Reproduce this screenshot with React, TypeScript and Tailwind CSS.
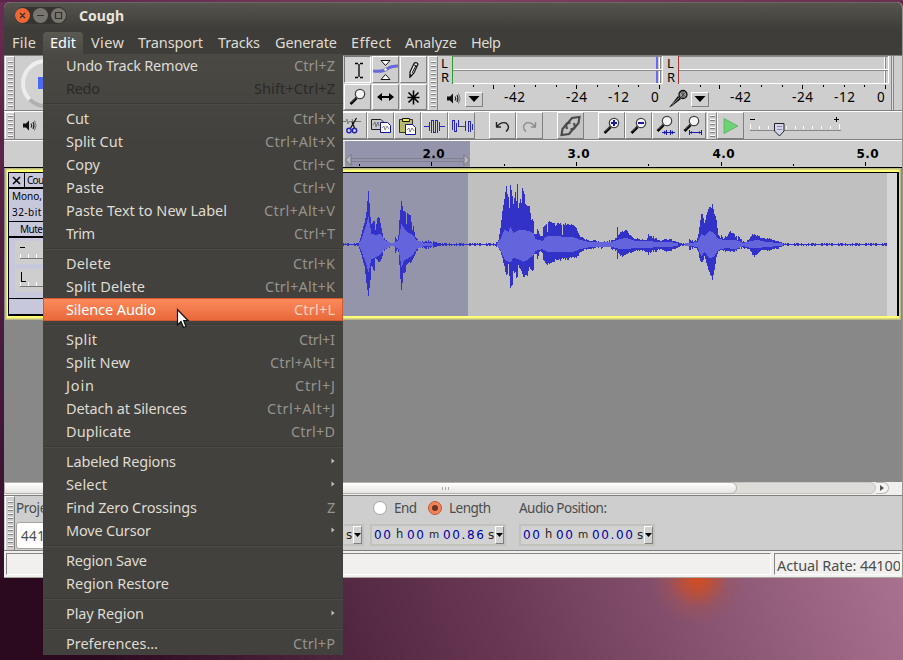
import React, { useLayoutEffect, useRef } from "react";

type FitProps = { t: string; w: number; className?: string };

/* Spreads or tightens a label so that it takes exactly `w` pixels. */
function Fit({ t, w, className = "" }: FitProps) {
  const ref = useRef<HTMLSpanElement>(null);
  useLayoutEffect(() => {
    const el = ref.current;
    if (!el) return;
    el.style.width = "auto";
    el.style.letterSpacing = "0px";
    const natural = el.getBoundingClientRect().width;
    el.style.letterSpacing = `${(w - natural) / Math.max(1, t.length - 1)}px`;
    el.style.width = `${w}px`;
  }, [t, w]);
  return (
    <span ref={ref} className={`inline-block shrink-0 whitespace-pre ${className}`}>
      {t}
    </span>
  );
}

type Item = [label: string, w: number, key?: string, kw?: number];
const groups: Item[][] = [
  [["Undo Track Remove", 132, "Ctrl+Z", 41], ["Redo", 34, "Shift+Ctrl+Z", 81]],
  [
    ["Cut", 23, "Ctrl+X", 42],
    ["Split Cut", 57, "Ctrl+Alt+X", 70],
    ["Copy", 34, "Ctrl+C", 42],
    ["Paste", 38, "Ctrl+V", 42],
    ["Paste Text to New Label", 161, "Ctrl+Alt+V", 71],
    ["Trim", 29, "Ctrl+T", 41],
  ],
  [["Delete", 45, "Ctrl+K", 42], ["Split Delete", 79, "Ctrl+Alt+K", 70], ["Silence Audio", 90, "Ctrl+L", 41]],
  [
    ["Split", 31, "Ctrl+I", 36],
    ["Split New", 64, "Ctrl+Alt+I", 65],
    ["Join", 28, "Ctrl+J", 40],
    ["Detach at Silences", 121, "Ctrl+Alt+J", 68],
    ["Duplicate", 65, "Ctrl+D", 44],
  ],
  [
    ["Labeled Regions", 110, ">"],
    ["Select", 41, ">"],
    ["Find Zero Crossings", 131, "Z", 8],
    ["Move Cursor", 85, ">"],
  ],
  [["Region Save", 81], ["Region Restore", 103]],
  [["Play Region", 78, ">"]],
  [["Preferences...", 92, "Ctrl+P", 42]],
];

function Row({ item }: { item: Item }) {
  const [label, w, key, kw] = item;
  const active = label === "Silence Audio";
  const off = label === "Redo";
  const tone = active
    ? "border-[#d4592c] bg-linear-to-b from-[#fb8a5c] to-[#e9693a] text-white"
    : off
      ? "border-transparent text-[#2b2a28]"
      : "border-transparent text-[#dfdbd2]";
  return (
    <div className={`flex h-[23px] items-center justify-between border pr-[7px] pb-[2px] pl-[22px] ${tone}`}>
      <Fit t={label} w={w} />
      {key === ">" ? (
        <svg width="4" height="6" className="mt-[1px]"><path d="M.5 .5L3.500 3L.5 5.500Z" fill="#c5c1b9" /></svg>
      ) : key ? (
        <Fit t={key} w={kw || 8} className={active ? "text-[#f9d2c3]" : off ? "text-[#2b2a28]" : "text-[#96938c]"} />
      ) : null}
    </div>
  );
}

function Menu() {
  return (
    <div className="absolute top-[54px] left-[43px] z-20 h-[601px] w-[300px] bg-[#42413d] bg-linear-to-b from-[#4a4944] to-[#42413d] to-15% text-[14.5px] leading-[20px]">
      {groups.map((g, i) => (
        <React.Fragment key={i}>
          {i > 0 && (
            <div className="h-[7px] pt-[3px]">
              <div className="h-[2px] border-t border-b border-t-[#3b3a36] border-b-[#4b4a46]" />
            </div>
          )}
          {g.map((it) => <Row key={it[0]} item={it} />)}
        </React.Fragment>
      ))}
    </div>
  );
}

function Grip({ n, className = "" }: { n: number; className?: string }) {
  return (
    <div className={`flex w-[10px] shrink-0 flex-col items-center justify-center gap-[2px] border-t border-r border-l border-t-white border-r-[#858585] border-l-white ${className}`}>
      {Array.from({ length: n }, (_, i) => (
        <div key={i} className="h-[2px] w-[5px] border-t border-b border-t-white border-b-[#828282]" />
      ))}
    </div>
  );
}

function Btn({ children, className = "w-[27px]", down = false }: { children?: React.ReactNode; className?: string; down?: boolean }) {
  const edge = down ? "border-t-[#777] border-l-[#777] border-r-white border-b-white bg-[#d4d4d4]" : "border-t-white border-l-white border-r-[#808080] border-b-[#808080]";
  return <div className={`flex shrink-0 items-center justify-center border ${edge} ${className}`}>{children}</div>;
}

function Svg({ children, w = 25, h = 25 }: { children: React.ReactNode; w?: number; h?: number }) {
  return <svg width={w} height={h} viewBox={`0 0 ${w} ${h}`} fill="none" className="shrink-0">{children}</svg>;
}

function Lens({ mark = "" }: { mark?: string }) {
  const small = mark === "fit" || mark === "sel";
  return (
    <Svg>
      <g transform={small ? "translate(-1 -2)" : ""}>
        <path d="M5.500 20L11.500 14" stroke="#000" strokeWidth="2.600" />
        <path d="M6 18.500L10.500 14" stroke="#999" strokeWidth=".7" />
        <circle cx="15" cy="10" r="4.700" fill="#f4f4f4" stroke="#444" strokeWidth="1.200" />
      </g>
      {mark === "+" && <path d="M12 10H18M15 7V13" stroke="#1818a8" strokeWidth="2" />}
      {mark === "-" && <path d="M12 10H18" stroke="#1818a8" strokeWidth="2" />}
      {mark === "fit" && <path d="M9 19.500H22M13.500 17V22M17.500 17V22" stroke="#1818b0" />}
      {mark === "fit" && <path d="M11 17.500V21.500L13.500 19.500ZM20 17.500V21.500L17.500 19.500Z" fill="#1818b0" />}
      {mark === "sel" && <path d="M9.500 17V22M21.500 17V22M10 19.500H21" stroke="#1818b0" />}
      {mark === "sel" && <path d="M10 19.500L12 18V21ZM21 19.500L19 18V21Z" fill="#1818b0" />}
    </Svg>
  );
}

function Speaker() {
  return (
    <Svg w={15} h={13}>
      <path d="M0 4.500H3L6 1.500V11.500L3 8.500H0Z" fill="#111" />
      <path d="M8 4.500Q9.500 6.500 8 8.500M10 3Q12 6.500 10 10" stroke="#222" strokeWidth="1.100" />
      <path d="M11.500 1.500Q14.500 6.500 11.500 11.500" stroke="#666" strokeWidth=".9" />
    </Svg>
  );
}

function Tools() {
  return (
    <div className="grid w-[83px] shrink-0 grid-cols-3 grid-rows-2 gap-[1px]">
      <Btn down className=""><Svg><path d="M10 6.500H13M15 6.500H18M10 20.500H13M15 20.500H18M14 7V20" stroke="#000" strokeWidth="1.300" /></Svg></Btn>
      <Btn className="">
        <Svg>
          <path d="M0 14Q10 15 14 12T25 9" stroke="#6868dc" strokeWidth="3" />
          <path d="M8 3.500H17L12.500 8.500ZM8 22.500H17L12.500 17.500Z" fill="#fff" stroke="#111" />
          <circle cx="12.500" cy="12.500" r="1.500" fill="#fff" stroke="#777" strokeWidth=".5" />
        </Svg>
      </Btn>
      <Btn className="">
        <Svg>
          <path d="M9 15L13 6.500Q15 4.500 17 7L13 16L9 20Z" fill="#eee" stroke="#111" strokeWidth="1.200" />
          <path d="M12.500 7.500L16 9.500M11 16L15 8.500" stroke="#111" />
          <path d="M8.500 21L9 17L11.500 18.500Z" fill="#111" />
        </Svg>
      </Btn>
      <Btn className=""><Lens /></Btn>
      <Btn className=""><Svg><path d="M6 13H19" stroke="#000" strokeWidth="2" /><path d="M4 13L9 9V17ZM21 13L16 9V17Z" fill="#000" /></Svg></Btn>
      <Btn className=""><Svg><path d="M12.500 6.500V20.500M6.500 13.500H18.500M7.500 8.500L17.500 18.500M17.500 8.500L7.500 18.500" stroke="#000" strokeWidth="1.600" /></Svg></Btn>
    </div>
  );
}

function Mic() {
  return (
    <Svg w={19} h={19}>
      <path d="M0 18.500L9 7L12 10L3 17Z" fill="#111" />
      <path d="M3 15.500L10 9" stroke="#999" />
      <circle cx="14" cy="5.500" r="4" fill="#999" stroke="#111" strokeWidth="1.300" />
      <path d="M11 3L17 8M12 8L17 3M14 2V9" stroke="#333" strokeWidth=".7" />
    </Svg>
  );
}

function Meter({ color, rec = false }: { color: string; rec?: boolean }) {
  const o = rec ? 226 : 0;
  const ticks = rec ? [700, 719, 740, 761, 782, 802, 823, 844, 864, 885] : [473, 493, 514, 535, 556, 576, 597, 618, 638, 659];
  return (
    <div className="flex w-[226px] shrink-0 flex-col">
      <div className="flex h-[28px]">
        <div className="w-[14px] shrink-0 pl-[3px] text-[13px] leading-[14px] text-black">
          <div className="h-[14px]">L</div>
          <div className="h-[14px]">R</div>
        </div>
        <div className={`w-[1px] ${color}`} />
        <div className="flex flex-1 flex-col">
          {[0, 1].map((i) => (
            <div key={i} className={`flex h-[14px] justify-end border-t border-b border-t-[#8a8a8a] border-b-white ${rec ? "pr-[2px]" : "pr-[1px]"}`}>
              {!rec && <div className="mr-[1px] w-[2px] bg-[#6a6af0]" />}
              <div className="w-[2px] border-r border-l border-r-[#888] border-l-white" />
            </div>
          ))}
        </div>
        <div className="w-[2px] border-l border-white" />
      </div>
      <svg width="226" height="5" className="shrink-0" shapeRendering="crispEdges">
        {ticks.map((t, i) => <path key={t} d={`M${t - 438 - o + 0.5} 1V${[1, 5, 9].includes(i) ? 5 : 3}`} stroke="#000" />)}
      </svg>
      <div className={`-mt-[1px] flex h-[20px] items-center text-[13.5px] text-black ${rec ? "pl-[5px]" : "pl-[9px]"}`}>
        <div className={rec ? "w-[22px]" : "w-[18px]"}>{rec ? <Mic /> : <Speaker />}</div>
        <Btn className="mt-[2px] h-[15px] w-[18px]"><svg width="12" height="6"><path d="M.5 0H11.500L6 6Z" /></svg></Btn>
        <Fit t="-42" w={21} className="-mt-[2px] ml-[21px]" />
        <Fit t="-24" w={21} className="-mt-[2px] ml-[41px]" />
        <Fit t="-12" w={21} className="-mt-[2px] ml-[21px]" />
        <Fit t="0" w={8} className="-mt-[2px] ml-[22px]" />
      </div>
    </div>
  );
}

function TopBar() {
  return (
    <div className="flex h-[56px] shrink-0 border-t border-b border-[#7f7f7f]">
      <Grip n={12} className="ml-[1px]" />
      <div className="flex w-[329px] items-center pl-[6px]">
        <div className="flex h-[49px] w-[49px] items-center justify-center rounded-full border-[4px] border-t-[#f0f0f0] border-r-[#bbb] border-b-[#b0b0b0] border-l-[#ececec] bg-[#d2d2d2]">
          <div className="h-[12px] w-[15px] bg-[#4a6af0]" />
        </div>
      </div>
      <Tools />
      <div className="w-[1px]" />
      <Grip n={12} />
      <Meter color="bg-[#2f9a35]" />
      <Meter color="bg-[#a83232]" rec />
      <div className="w-[1px]" />
      <div className="w-[3px] border-r border-l border-[#858585] bg-[#dedede]" />
    </div>
  );
}

function EditBar() {
  const page = (x: number, y: number) => (
    <g transform={`translate(${x} ${y})`}>
      <path d="M.5 .5H7.500L10.500 3.500V10.500H.5Z" fill="#fff" stroke="#1515a0" />
      <path d="M2 6L4 4L5 8L7 4L9 7" stroke="#555" strokeWidth=".7" />
    </g>
  );
  return (
    <div className="flex h-[28px] shrink-0 border-b border-[#7f7f7f]">
      <Grip n={6} className="ml-[1px]" />
      <div className="flex w-[325px] items-center pl-[8px]"><Speaker /></div>
      <Btn><Svg><path d="M1 8.500H5L6 6L7 11L8 8.500H20M11 6L13 11" stroke="#777" /><path d="M15.500 5L9 16M11 9L13.500 15" stroke="#111" strokeWidth="1.300" /><circle cx="8" cy="17.500" r="2.200" stroke="#2222b0" strokeWidth="1.400" /><circle cx="13.500" cy="17.500" r="2.200" stroke="#2222b0" strokeWidth="1.400" /></Svg></Btn>
      <Btn><Svg><path d="M3.500 6.500H13L15.500 9V16.500H3.500Z" fill="#c8c8c8" stroke="#222" /><path d="M5 12L7 9L8 14L10 9L11 13" stroke="#555" strokeWidth=".7" />{page(12, 9)}</Svg></Btn>
      <Btn><Svg><path d="M4.500 6.500H17.500V19.500H4.500Z" fill="#b9b96a" stroke="#333" /><path d="M7.500 5.500H14.500V8.500H7.500Z" fill="#eded58" stroke="#111" />{page(10, 11)}</Svg></Btn>
      <Btn><Svg><path d="M2 13.500H7M18 13.500H23" stroke="#2626c0" /><path d="M7.500 9V18M9.500 7V20M11.500 7V20M13.500 7V20M15.500 7V20M17.500 9V18M9 7.500H12M13 7.500H16M9 19.500H10M11 19.500H14" stroke="#2626c0" /></Svg></Btn>
      <Btn><Svg><path d="M10 13.500H16" stroke="#444" /><path d="M3.500 8V17M5.500 7V19M7.500 10V19M9.500 7V14M16.500 8V18M19.500 8V19M21.500 8V19M23.500 11V17M3 7.500H6M5 18.500H8M19 8.500H22" stroke="#2626c0" /></Svg></Btn>
      <div className="w-[14px]" />
      <Btn><Svg><path d="M6.500 14V9M6 14H11M7 13.500Q11 8.500 16 10Q21 14 16 18.500" stroke="#222" strokeWidth="1.400" /></Svg></Btn>
      <Btn><Svg><path d="M18.500 14V9M19 14H14M18 13.500Q14 8.500 9 10Q4 14 9 18.500" stroke="#8c8c8c" strokeWidth="1.400" /></Svg></Btn>
      <div className="w-[14px]" />
      <Btn className="w-[27px] bg-[#c4c4c4]">
        <Svg>
          <path d="M9 16L8 12L14 5L21.500 4L20.500 10L16 15.500L12.500 16.500" stroke="#4a4a4a" strokeWidth="2.100" />
          <path d="M16 10L17 14L11 21L3.500 22L4.500 16L9 10.500L12.500 9.500" stroke="#4a4a4a" strokeWidth="2.100" />
        </Svg>
      </Btn>
      <div className="w-[14px]" />
      <Btn><Lens mark="+" /></Btn>
      <Btn><Lens mark="-" /></Btn>
      <Btn><Lens mark="fit" /></Btn>
      <Btn><Lens mark="sel" /></Btn>
      <Grip n={6} className="ml-[1px]" />
      <Btn className="w-[27px]"><Svg><path d="M6 5.500L20 13L6 20.500Z" fill="#6ad472" stroke="#51a85a" strokeWidth=".7" /></Svg></Btn>
      <svg width="100" height="27" className="ml-[3px]" shapeRendering="crispEdges">
        <path d="M3 7.500H8M87 7.500H92M89.500 5V10" stroke="#000" />
        {Array.from({ length: 11 }, (_, i) => <path key={i} d={`M${3.5 + i * 8.9} ${i % 10 ? 14 : 12}V17`} stroke="#fff" />)}
        <path d="M3 18.500H94" stroke="#888" />
        <path d="M27.500 11.500H37V19L32.500 24L27.500 19Z" fill="#d4d4ec" stroke="#222" shapeRendering="auto" />
        <path d="M30 14.500H35M30 17.500H35" stroke="#8888a8" />
      </svg>
    </div>
  );
}

function Ruler() {
  return (
    <div className="flex h-[28px] shrink-0 border-t border-b border-t-white border-b-black">
      <div className="w-[339px] border-r border-[#ddd]" />
      <svg width="558" height="26" shapeRendering="crispEdges" fontFamily="'DejaVu Sans'" fontWeight="700" fontSize="12">
        <rect x="2" width="125" height="26" fill="#9494ac" />
        <path d="M8 17.500H120M8 20.500H120" stroke="#7f7f8e" />
        <path d="M2.500 19L8 13.500V24.500ZM126.500 19L121 13.500V24.500Z" fill="#b8b8c4" stroke="#777" shapeRendering="auto" />
        {[16.5, 161.500, 305.500, 450.500].map((x) => <path key={x} d={`M${x} 23V25`} stroke="#000" />)}
        {[88.5, 233.500, 378.500, 522.500].map((x, i) => (
          <React.Fragment key={x}>
            <path d={`M${x} 21V25`} stroke="#000" />
            <text x={x - 9} y="17" textLength="22">{`${i + 2}.0`}</text>
          </React.Fragment>
        ))}
      </svg>
    </div>
  );
}

/* x, peak above the axis, peak below it */
const PEAKS = [
  [343, 1, 1], [358, 1, 1], [361, 10, 10], [364, 22, 22], [366, 32, 38], [368, 53, 51], [370, 28, 35], [371, 20, 20], [374, 23, 26], [375, 14, 13],
  [377, 27, 16], [379, 27, 18], [381, 16, 13], [383, 6, 6], [387, 3, 3], [390, 1, 2], [394, 1, 2], [395, 7, 8], [397, 5, 5], [398, 9, 7], [399, 24, 20],
  [401, 43, 45], [403, 33, 28], [405, 32, 27], [406, 20, 20], [407, 31, 19], [410, 29, 18], [412, 14, 15], [413, 19, 13], [415, 7, 8], [418, 3, 3],
  [428, 3, 3], [436, 1.500, 1.500], [444, 1, 1], [495, 1, 1], [498, 4, 3], [500, 16, 6], [502, 33, 13], [504, 45, 21], [506, 58, 30], [507, 50, 29],
  [508, 47, 20], [509, 36, 32], [510, 59, 43], [512, 48, 40], [513, 40, 25], [515, 52, 28], [516, 43, 32], [517, 60, 33], [518, 36, 20], [520, 45, 25],
  [521, 41, 25], [522, 56, 30], [524, 50, 31], [525, 40, 30], [527, 38, 31], [529, 38, 23], [531, 24, 25], [533, 23, 25], [534, 10, 8], [536, 11, 9],
  [537, 15, 14], [539, 10, 7], [542, 8, 8], [543, 17, 15], [546, 21, 19], [547, 12, 19], [548, 22, 18], [553, 22, 18], [555, 19, 15], [557, 21, 14],
  [561, 20, 15], [562, 9, 13], [563, 20, 14], [573, 20, 13], [577, 13, 11], [580, 8, 7], [585, 5, 5], [592, 3, 3], [596, 4, 3], [600, 1, 3],
  [603, 2, 2], [610, 3, 2], [615, 6, 6], [616, 7, 6], [617, 18, 15], [618, 9, 8], [622, 13, 11], [626, 14, 9], [631, 8, 8], [635, 5, 5],
  [643, 5, 6], [646, 4, 6], [648, 9, 9], [652, 7, 6], [660, 4, 5], [670, 5, 6], [677, 2, 3], [680, 1, 1], [688, 1, 1], [689, 5, 4],
  [693, 2, 2], [697, 5, 4], [699, 17, 12], [701, 30, 17], [702, 30, 18], [704, 22, 12], [707, 32, 21], [709, 37, 27], [711, 36, 31], [712, 40, 35],
  [714, 30, 25], [716, 25, 13], [718, 9, 6], [720, 6, 5], [721, 10, 5], [723, 5, 5], [727, 8, 6], [729, 13, 7], [733, 11, 6], [737, 5, 5],
  [738, 8, 4], [742, 3, 2], [745, 2, 3], [750, 7, 6], [754, 10, 11], [758, 8, 8], [762, 6, 5], [772, 5, 5], [778, 3, 3], [782, 1, 1], [887, 1, 1],
];
const RMS = [
  [343, 0, 0], [358, 0, 0], [361, 5, 6], [366, 20, 20], [368, 27, 27], [371, 10, 14], [376, 9, 12], [380, 10, 9], [384, 4, 4], [392, 0.500, 0.500], [398, 4, 4],
  [401, 20, 22], [404, 15, 15], [408, 11, 13], [412, 9, 10], [416, 4, 4], [424, 1, 1], [440, 0, 0], [496, 0, 0], [500, 5, 5], [504, 14, 14],
  [508, 12, 17], [510, 17, 17], [513, 11, 13], [518, 14, 14], [523, 14, 17], [528, 13, 14], [533, 11, 10], [535, 5, 6], [542, 3, 4], [545, 7, 6], [549, 8, 7],
  [572, 7, 7], [580, 4, 4], [590, 1.500, 2], [610, 1.500, 1.500], [620, 5, 4], [626, 6, 4], [635, 3, 3], [670, 2, 2], [680, 0, 0], [690, 1, 1],
  [697, 2, 2], [701, 10, 11], [704, 8, 7], [709, 13, 13], [713, 11, 12], [718, 5, 5], [725, 4, 3], [735, 4, 4], [743, 1, 1], [750, 3, 3],
  [757, 4, 3], [765, 2, 2], [780, 1, 1], [785, 0, 0], [887, 0, 0],
];

function bars(keys: number[][], rough: boolean) {
  let d = "";
  let k = 0;
  for (let x = 343; x < 887; x++) {
    while (k < keys.length - 2 && keys[k + 1][0] <= x) k++;
    const [a, b] = [keys[k], keys[k + 1]];
    const f = (x - a[0]) / (b[0] - a[0]);
    let up = a[1] + (b[1] - a[1]) * f;
    let dn = a[2] + (b[2] - a[2]) * f;
    if (rough) {
      const r = ((x * x * 31 + x * 17) >> 2) % 11;
      if (up > 2 && up < 30) up += r > 8 ? 1 : r < 3 ? -1 : 0;
      if (dn > 2) dn += r > 6 ? 1 : r < 2 ? -1 : 0;
      if (up <= 1.2) {
        up = r > 5 ? 1 : 0;
        dn = r > 3 && r < 9 ? 1 : 0;
      }
    }
    const top = Math.round(up);
    const h = top + Math.round(dn) + 1;
    if (rough || h > 1) d += `M${x - 343} ${71 - top}h1v${h}h-1z`;
  }
  return d;
}

function TrackArea() {
  return (
    <div className="h-[314px] shrink-0 bg-[#888] pl-[1px]">
      <div className="w-[896px] border border-[#b9b985]">
        <div className="border border-[#d8d87e]">
          <div className="flex h-[148px] border-t-2 border-b-2 border-l border-[#ffff78]">
            <div className="flex h-full flex-1 border-t border-r-2 border-b-2 border-l border-black">
              <div className="flex w-[334px] shrink-0 flex-col bg-[#c8c8dc] text-[10px] leading-[14px] text-black">
                <div className="flex h-[16px] border-b-2 border-black">
                  <div className="flex w-[16px] items-center justify-center border-r border-black"><svg width="9" height="9"><path d="M1 1L8 8M8 1L1 8" stroke="#000" strokeWidth="1.600" /></svg></div>
                  <Fit t="Cough" w={30} className="pl-[2px]" />
                </div>
                <div className="flex h-[33px] flex-col items-start gap-[2px] border-b border-black pl-[3px]">
                  <Fit t="Mono, 44100Hz" w={73} />
                  <Fit t="32-bit float" w={56} />
                </div>
                <div className="h-[16px] border-b-2 border-black pl-[11px]"><Fit t="Mute" w={23} /></div>
                <div className="flex h-[61px] flex-col gap-[5px] border-b border-black pt-[3px] pl-[6px]">
                  {["-", "L"].map((s) => (
                    <svg key={s} width="150" height="23" shapeRendering="crispEdges">
                      <rect width="150" height="23" fill="#cecece" />
                      {s === "-" ? <path d="M5 6.500H10" stroke="#000" /> : <path d="M6.500 3V12.500H11" stroke="#000" fill="none" />}
                      <path d="M5 17.500H140" stroke="#777" />
                      {[5.5, 13.500, 21.500, 28.500].map((x) => <path key={x} d={`M${x} 13V17`} stroke="#fff" />)}
                    </svg>
                  ))}
                </div>
              </div>
              <svg width="554" height="143" className="shrink-0" shapeRendering="crispEdges">
                <rect width="125" height="143" fill="#9494ab" />
                <rect x="125" width="419" height="143" fill="#c0c0c0" />
                <rect x="544" width="10" height="143" fill="#d6d6d6" />
                <path d={bars(PEAKS, true)} fill="#3232c8" />
                <path d={bars(RMS, false)} fill="#6464dc" />
              </svg>
            </div>
            <div className="w-[1px] bg-[#ffff78]" />
          </div>
        </div>
      </div>
    </div>
  );
}

function TimeField({ tail }: { tail: string }) {
  return (
    <div className="flex h-[22px] w-[136px] shrink-0 items-center border-2 border-[#c2c2bc] bg-[#d2d2d2] pl-[2px] font-['DejaVu_Sans'] text-[12px] text-[#0000a8]">
      <Fit t="00" w={17} className="mr-[5px]" />
      <Fit t="h" w={8} className="mr-[3px] text-[11.5px] text-[#222]" />
      <Fit t="00" w={17} className="mr-[5px]" />
      <Fit t="m" w={10} className="mr-[4px] text-[10.5px] text-[#222]" />
      <Fit t={tail} w={41} className="mr-[4px]" />
      <Fit t="s" w={6} className="text-[#222]" />
      <Btn className="ml-auto h-[18px] w-[9px]"><svg width="7" height="4" className="shrink-0"><path d="M0 0H7L3.500 4Z" /></svg></Btn>
    </div>
  );
}

function SelectionBar() {
  return (
    <div className="flex h-[56px] shrink-0 border-t border-b border-[#7f7f7f] text-[13.5px] text-[#4c4c4c]">
      <Grip n={12} className="ml-[1px]" />
      <div className="w-[329px] pl-[1px]">
        <div className="flex h-[24px] items-center"><Fit t="Project" w={42} /></div>
        <div className="mt-[2px] flex h-[27px] w-[80px] items-center rounded-[3px] border border-[#a8a49d] bg-white pt-[1px] pl-[4px]"><Fit t="44100" w={40} /></div>
      </div>
      <div className="flex flex-1 flex-col">
        <div className="flex h-[24px] items-center pl-[29px]">
          <div className="size-[14px] rounded-full border border-[#aaa69f] bg-white" />
          <Fit t="End" w={23} className="ml-[7px]" />
          <div className="ml-[11px] flex size-[14px] items-center justify-center rounded-full border border-[#ba5a38] bg-[#f38259]"><div className="size-[6px] rounded-full bg-[#683621]" /></div>
          <Fit t="Length" w={42} className="ml-[7px]" />
          <Fit t="Audio Position:" w={88} className="ml-[28px]" />
        </div>
        <div className="mt-[4px] flex">
          <div className="flex h-[22px] w-[20px] items-center border-y-2 border-r-2 border-[#c2c2bc] bg-[#d2d2d2] pl-[2px] font-['DejaVu_Sans'] text-[12px] text-[#222]">
            s<Btn className="ml-auto h-[18px] w-[9px]"><svg width="7" height="4" className="shrink-0"><path d="M0 0H7L3.500 4Z" /></svg></Btn>
          </div>
          <div className="w-[6px]" />
          <TimeField tail="00.86" />
          <div className="w-[13px]" />
          <TimeField tail="00.00" />
        </div>
      </div>
    </div>
  );
}

const MENUS: [string, number, number][] = [["File", 24, 14], ["Edit", 26, 14], ["View", 33, 14], ["Transport", 65, 15], ["Tracks", 42, 15], ["Generate", 62, 14], ["Effect", 40, 14], ["Analyze", 52, 14], ["Help", 30, 14]];

export default function App() {
  return (
    <div className="relative h-[660px] w-[903px] overflow-hidden bg-linear-to-b from-[#6a2c52] via-[#44183a] via-60% to-[#2a0a20] font-['Noto_Sans','Open_Sans',sans-serif]">
      <div className="flex h-full flex-col">
        <div className="h-[2px] shrink-0 bg-linear-to-r from-[#5c2449] via-[#7d3f63] to-[#6a3050]" />
        <div className="ml-[4px] flex h-[576px] w-[899px] shrink-0 flex-col overflow-hidden rounded-t-[6px] border-r border-[#96948e] bg-[#cecece]">
          <div className="flex h-[27px] shrink-0 items-center gap-[3px] border-t border-[#6a6862] bg-linear-to-b from-[#55544d] to-[#3e3d39] pb-[1px] pl-[11px]">
            <svg width="52" height="17">
              <rect width="52" height="17" rx="8.500" fill="#353430" />
              <circle cx="7.500" cy="8.500" r="7.500" fill="#ef6534" />
              <circle cx="25.500" cy="8.500" r="7.500" fill="#77756d" />
              <circle cx="43.500" cy="8.500" r="7.500" fill="#77756d" />
              <path d="M5 6L10 11M10 6L5 11M22 8.500H29M40.500 5.500H46.500V11.500H40.500Z" stroke="#33312d" strokeWidth="1.200" fill="none" />
            </svg>
            <Fit t="Cough" w={45} className="ml-[9px] text-[14px] font-bold text-[#e9e5dc]" />
          </div>
          <div className="flex h-[26px] shrink-0 items-end bg-[#3e3d39] pl-[1px] text-[14.5px] text-[#dfdbd2]">
            {MENUS.map(([t, w, gap], i) => (
              <div key={t} className={`flex h-[23px] items-center rounded-t-[4px] pb-[1px] ${i === 2 ? "pl-[8px]" : "pl-[7px]"} ${gap === 15 ? "pr-[8px]" : "pr-[7px]"} ${t === "Edit" ? "bg-linear-to-b from-[#5a5952] to-[#4a4944] text-white" : ""}`}>
                <Fit t={t} w={w} />
              </div>
            ))}
          </div>
          <TopBar />
          <div className="h-[1px] shrink-0 bg-white" />
          <EditBar />
          <Ruler />
          <TrackArea />
          <div className="flex h-[13px] shrink-0 bg-[#f0efed]">
            <div className="z-10 flex h-[12px] w-[733px] items-center justify-end rounded-r-full border border-[#b5b1aa] bg-linear-to-b from-white to-[#e6e4e1] pr-[287px]">
              <div className="flex gap-[2px]">{[0, 1, 2].map((i) => <div key={i} className="h-[3px] w-[1px] bg-[#aaa]" />)}</div>
            </div>
            <div className="-ml-[7px] h-[12px] w-[146px] rounded-r-full border border-[#c9c6c1] bg-[#dedcd8]" />
            <div className="flex h-[12px] w-[13px] items-center justify-center rounded-r-full border border-l-0 border-[#bdb9b2] bg-[#f4f3f1]"><svg width="4" height="6"><path d="M0 0L4 3L0 6Z" fill="#555" /></svg></div>
          </div>
          <SelectionBar />
          <div className="flex h-[27px] shrink-0 gap-[3px] border-b border-[#aaa69f] bg-[#f1f0ee] pt-[2px] pr-[1px] pb-[2px] pl-[2px]">
            <div className="w-[765px] shrink-0 border border-t-[#858585] border-r-white border-b-white border-l-[#858585]" />
            <div className="flex flex-1 items-center overflow-hidden border border-t-[#858585] border-r-white border-b-white border-l-[#858585] pt-[3px] pl-[2px] text-[14.5px] text-[#4c4c4c]"><Fit t="Actual Rate: 44100" w={124} /></div>
          </div>
        </div>
        <div className="flex-1 overflow-hidden bg-linear-[70deg] from-[#2b0a20] from-10% via-[#693754] via-55% to-[#a8718f]">
          <div className="ml-[637px] h-[82px] w-[120px] bg-[radial-gradient(circle_at_50%_0,#d54c1d_0,#c54f2dbb_16px,#a8525066_30px,transparent_48px)]" />
        </div>
      </div>
      <Menu />
      <svg width="14" height="21" viewBox="0 0 14 21" className="absolute top-[308px] left-[176px] z-30">
        <path d="M1.500 1.500V17L5 13.500L7.500 19.500L10 18.500L7.700 12.500H12Z" fill="#fff" stroke="#111" strokeWidth="1.200" />
      </svg>
    </div>
  );
}
